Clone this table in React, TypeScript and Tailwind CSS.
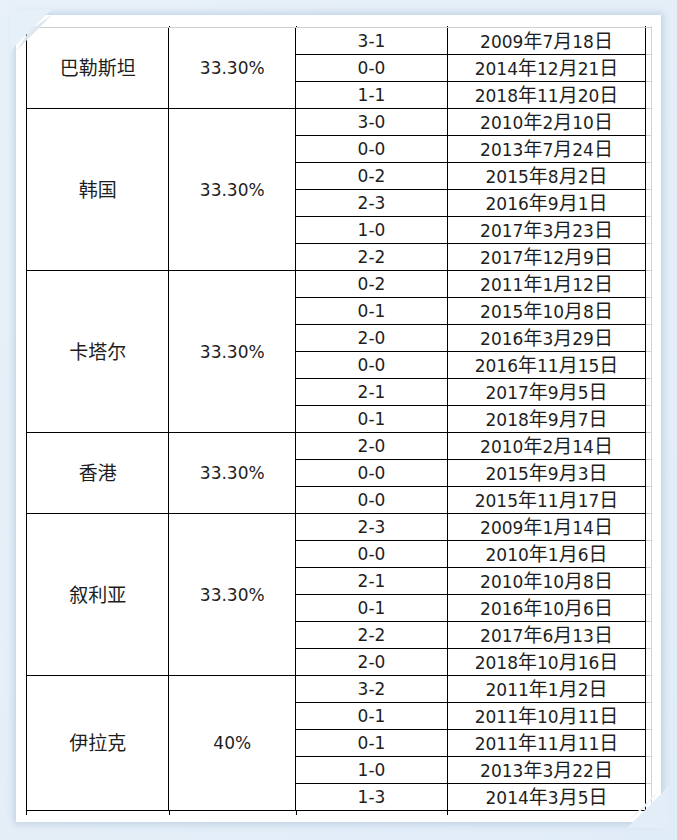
import React from 'react';

type Match = { score: string; date: string };
type Group = { team: string; rate: string; matches: Match[] };

const GROUPS: Group[] = [
  {
    team: '巴勒斯坦',
    rate: '33.30%',
    matches: [
      { score: '3-1', date: '2009年7月18日' },
      { score: '0-0', date: '2014年12月21日' },
      { score: '1-1', date: '2018年11月20日' },
    ],
  },
  {
    team: '韩国',
    rate: '33.30%',
    matches: [
      { score: '3-0', date: '2010年2月10日' },
      { score: '0-0', date: '2013年7月24日' },
      { score: '0-2', date: '2015年8月2日' },
      { score: '2-3', date: '2016年9月1日' },
      { score: '1-0', date: '2017年3月23日' },
      { score: '2-2', date: '2017年12月9日' },
    ],
  },
  {
    team: '卡塔尔',
    rate: '33.30%',
    matches: [
      { score: '0-2', date: '2011年1月12日' },
      { score: '0-1', date: '2015年10月8日' },
      { score: '2-0', date: '2016年3月29日' },
      { score: '0-0', date: '2016年11月15日' },
      { score: '2-1', date: '2017年9月5日' },
      { score: '0-1', date: '2018年9月7日' },
    ],
  },
  {
    team: '香港',
    rate: '33.30%',
    matches: [
      { score: '2-0', date: '2010年2月14日' },
      { score: '0-0', date: '2015年9月3日' },
      { score: '0-0', date: '2015年11月17日' },
    ],
  },
  {
    team: '叙利亚',
    rate: '33.30%',
    matches: [
      { score: '2-3', date: '2009年1月14日' },
      { score: '0-0', date: '2010年1月6日' },
      { score: '2-1', date: '2010年10月8日' },
      { score: '0-1', date: '2016年10月6日' },
      { score: '2-2', date: '2017年6月13日' },
      { score: '2-0', date: '2018年10月16日' },
    ],
  },
  {
    team: '伊拉克',
    rate: '40%',
    matches: [
      { score: '3-2', date: '2011年1月2日' },
      { score: '0-1', date: '2011年10月11日' },
      { score: '0-1', date: '2011年11月11日' },
      { score: '1-0', date: '2013年3月22日' },
      { score: '1-3', date: '2014年3月5日' },
    ],
  },
];

// CJK glyphs render a bit larger than the digits in the original sheet
function Cell({ text }: { text: string }) {
  const runs = text.match(/[\u4e00-\u9fff]+|[^\u4e00-\u9fff]+/g) || [];
  return (
    <span className="leading-none">
      {runs.map((r, i) =>
        /[\u4e00-\u9fff]/.test(r) ? (
          <span key={i} className="text-[19px]">
            {r}
          </span>
        ) : (
          <span key={i}>{r}</span>
        )
      )}
    </span>
  );
}

export default function App() {
  return (
    <div
      className="relative h-[840px] w-[677px] overflow-hidden bg-gradient-to-br from-[#e8f1f9] to-[#e0ecf7] pl-[16px] pt-[15px] text-[17px] text-[#1e1e1e]"
      style={{ fontFamily: '"DejaVu Sans", "Noto Sans CJK SC", sans-serif' }}
    >
      {/* Paper */}
      <div className="relative h-[807px] w-[645px] bg-white pl-[10px] pt-[11px] shadow-[0_0_7px_2px_rgba(120,155,190,0.35)]">
        <div className="w-[626px]">
          {/* cut-off row above */}
          <div className="flex h-[1px] border-l border-black">
            <div className="w-[143px] border-r border-black" />
            <div className="w-[127px] border-r border-black" />
            <div className="w-[152px] border-r border-black" />
            <div className="w-[198px] border-r border-black" />
            <div className="w-[6px] border-r border-[#d4d4d4]" />
          </div>
          <div className="border-l border-t border-l-black border-t-[#d0d0d0]">
            {GROUPS.map((g) => (
              <div key={g.team} className="flex">
                <div className="flex w-[143px] items-center justify-center border-b border-r border-black pt-[1px]">
                  <Cell text={g.team} />
                </div>
                <div className="flex w-[127px] items-center justify-center border-b border-r border-black pt-[1px]">
                  <Cell text={g.rate} />
                </div>
                <div className="flex flex-col">
                  {g.matches.map((m, i) => (
                    <div key={i} className="flex h-[27px]">
                      <div className="flex w-[152px] items-center justify-center border-b border-r border-black pt-[1px]">
                        <Cell text={m.score} />
                      </div>
                      <div className="flex w-[198px] items-center justify-center border-b border-r border-black pt-[1px]">
                        <Cell text={m.date} />
                      </div>
                      <div className="w-[6px] border-b border-r border-[#d4d4d4]" />
                    </div>
                  ))}
                </div>
              </div>
            ))}
            {/* cut-off row below */}
            <div className="flex h-[4px]">
              <div className="w-[143px] border-r border-black" />
              <div className="w-[127px] border-r border-black" />
              <div className="w-[152px] border-r border-black" />
              <div className="w-[198px] border-r border-black" />
              <div className="w-[6px] border-r border-[#d4d4d4]" />
            </div>
          </div>
        </div>

        {/* folded top-left corner */}
        <div className="absolute left-[-6px] top-[-6px] h-[42px] w-[42px] bg-[#e6f0f9] [clip-path:polygon(0_0,100%_0,0_100%)]" />
        <div className="absolute left-0 top-0 h-[36px] w-[36px] bg-gradient-to-br from-transparent via-[#dfe6ee] to-white [clip-path:polygon(100%_0,0_100%,40%_40%)]" />

        {/* folded bottom-right corner */}
        <div className="absolute bottom-[-6px] right-[-8px] h-[42px] w-[42px] bg-[#e2edf7] [clip-path:polygon(100%_0,100%_100%,0_100%)]" />
        <div className="absolute bottom-0 right-0 h-[34px] w-[34px] bg-gradient-to-tl from-[#e4e8ee] to-white [clip-path:polygon(100%_0,0_100%,55%_55%)]" />
      </div>
    </div>
  );
}
